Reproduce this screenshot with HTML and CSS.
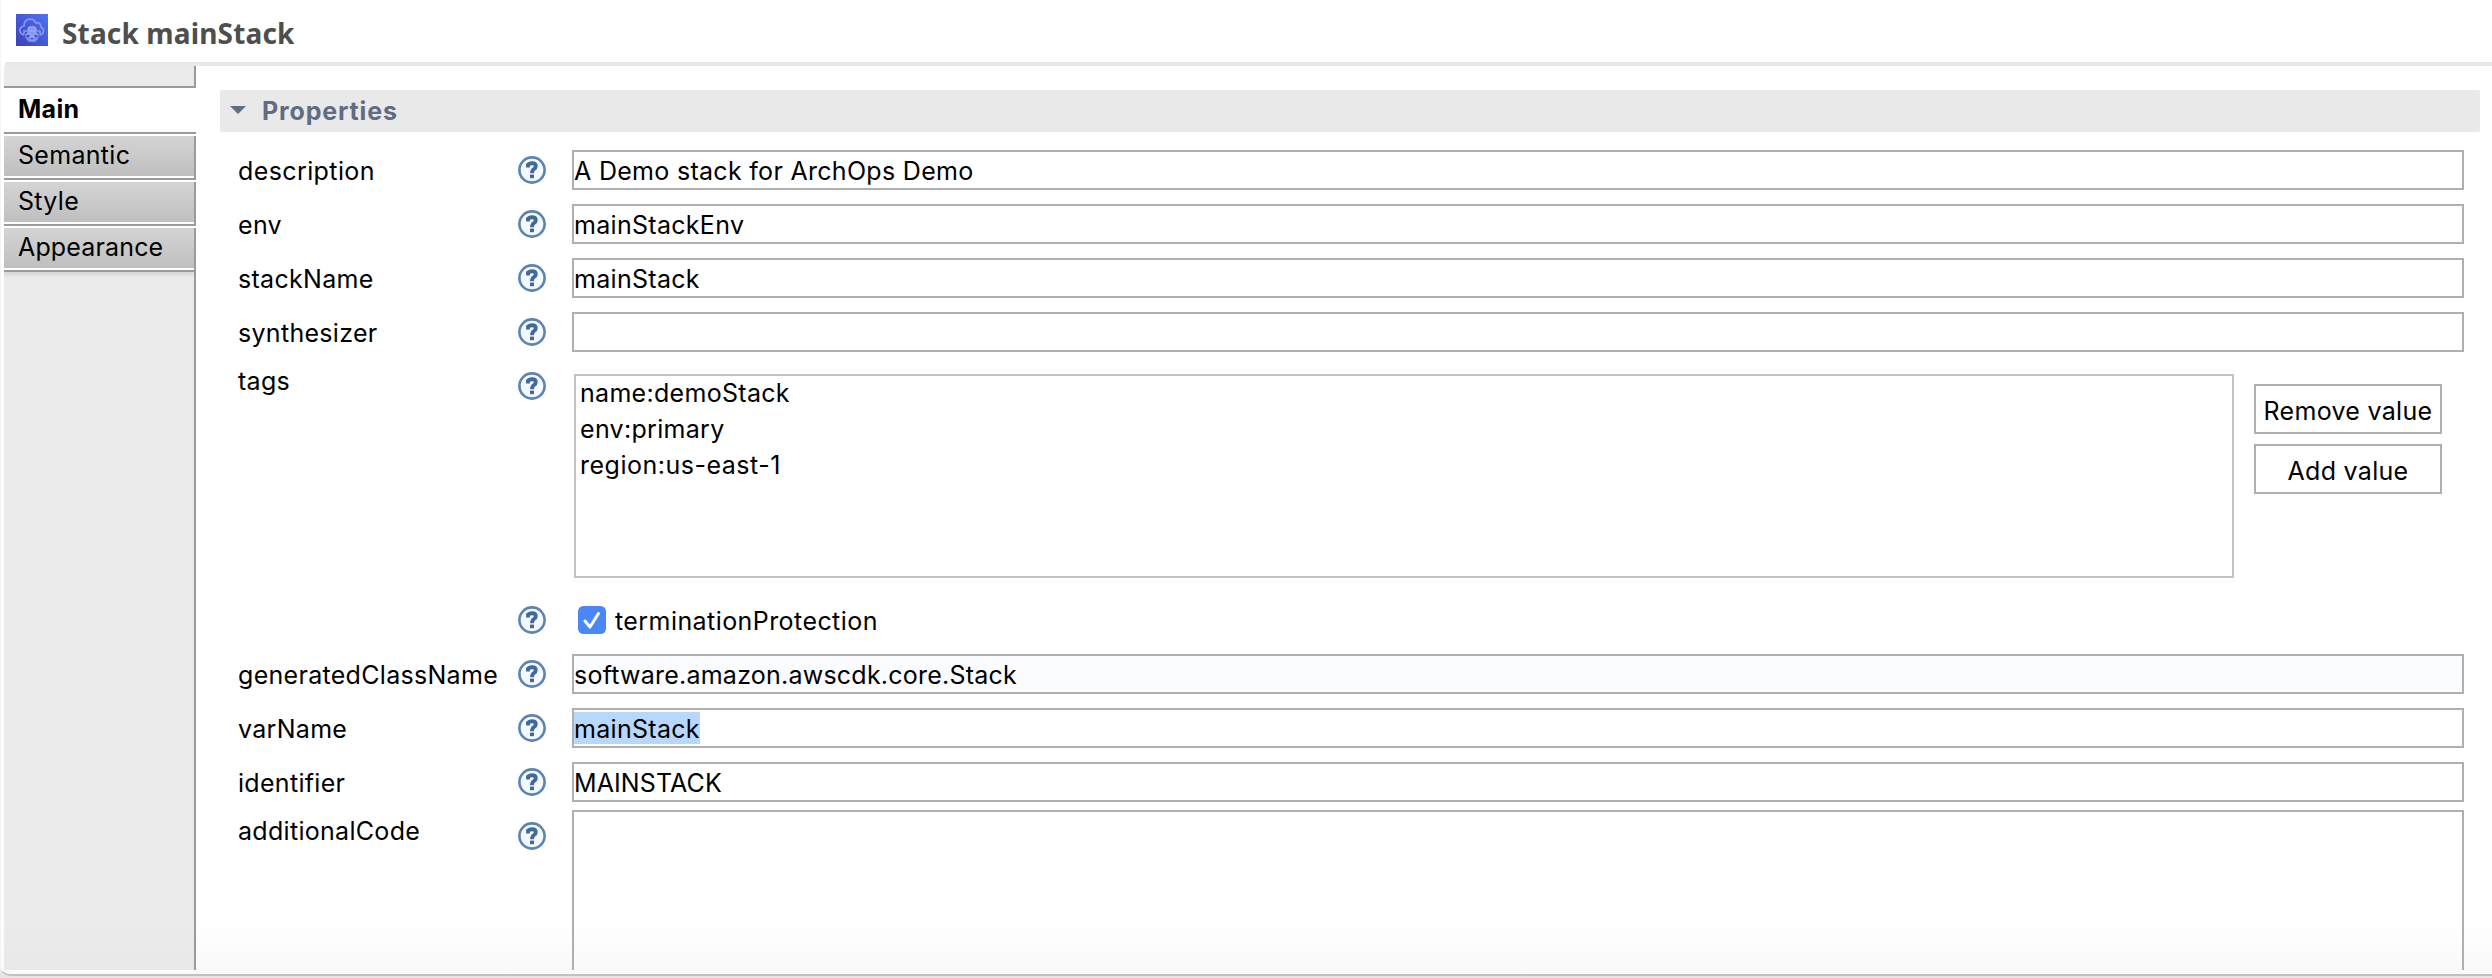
FILE: index.html
```
<!DOCTYPE html>
<html lang="en">
<head>
<meta charset="utf-8">
<title>Stack mainStack</title>
<link rel="stylesheet" href="styles.css">
</head>
<body>
<svg class="defs" width="0" height="0" aria-hidden="true">
  <symbol id="help" viewBox="0 0 28 28">
    <circle cx="14" cy="14" r="12.600" fill="#f3f9ff" stroke="#5b84b3" stroke-width="2.600"/>
    <path d="M10 11.500V8.600Q11.600 7.200 14 7.200Q17.800 7.200 17.800 10Q17.800 11.800 16 13Q14 14.300 14 17.200" fill="none" stroke="#42699c" stroke-width="3.900"/>
    <path d="M12 18.600h4v3.600h-4z" fill="#42699c"/>
  </symbol>
</svg>
<div class="panel">
  <header class="title">
    <svg class="logo" width="32" height="32" viewBox="0 0 32 32">
      <defs><linearGradient id="lg" x1="0" y1="1" x2="1" y2="0"><stop offset="0" stop-color="#3a40c0"/><stop offset="1" stop-color="#4f74ee"/></linearGradient></defs>
      <rect width="32" height="32" fill="url(#lg)"/>
      <g fill="none" stroke="#8797ee" stroke-width="1.700">
        <path d="M8 21C2 19 3 13 8 12C8 4 17 3 20 9C23 8 25 10 25 13C29 15 28 20 24 21"/>
        <path d="M12 17C11 11 21 11 20 17M8 20V17H24V20M9 22L12 19L16 22L20 19L23 22M10 23L13 27H19L22 23M13 24L16 21L19 24L16 27Z"/>
      </g>
      <path d="M12 13h8v7h-8zM14 21h4v3h-4z" fill="#a3b1f3" opacity=".7"/>
    </svg>
    <h1>Stack mainStack</h1>
  </header>
  <div class="body">
    <nav class="tabs">
      <div class="cap"></div>
      <div class="tab active">Main</div>
      <div class="tab">Semantic</div>
      <div class="tab">Style</div>
      <div class="tab appearance">Appearance</div>
      <div class="rest"></div>
    </nav>
    <main class="content">
      <div class="section">
        <svg width="16" height="8" viewBox="0 0 16 8"><path d="M0 0H16L8 8Z" fill="#5f6c82"/></svg>
        <h2>Properties</h2>
      </div>
      <div class="form">
        <div class="row"><label class="desc">description</label><svg class="help"><use href="#help"/></svg><div class="field">A Demo stack for ArchOps Demo</div></div>
        <div class="row"><label>env</label><svg class="help"><use href="#help"/></svg><div class="field">mainStackEnv</div></div>
        <div class="row"><label>stackName</label><svg class="help"><use href="#help"/></svg><div class="field">mainStack</div></div>
        <div class="row"><label>synthesizer</label><svg class="help"><use href="#help"/></svg><div class="field"></div></div>
        <div class="row tags">
          <label>tags</label><svg class="help"><use href="#help"/></svg>
          <div class="multi">
            <div class="list"><div>name:demoStack</div><div>env:primary</div><div class="region">region:us-east-1</div></div>
            <div class="buttons"><div class="button">Remove value</div><div class="button">Add value</div></div>
          </div>
        </div>
        <div class="row"><label></label><svg class="help"><use href="#help"/></svg>
          <div class="check">
            <svg width="28" height="28" viewBox="0 0 28 28"><rect width="28" height="28" rx="5.500" fill="#4a88f7"/><path d="M7 15L12 21L20.500 7.500" fill="none" stroke="#fff" stroke-width="3" stroke-linecap="round" stroke-linejoin="round"/></svg>
            <span>terminationProtection</span>
          </div>
        </div>
        <div class="row"><label>generatedClassName</label><svg class="help"><use href="#help"/></svg><div class="field readonly">software.amazon.awscdk.core.Stack</div></div>
        <div class="row"><label>varName</label><svg class="help"><use href="#help"/></svg><div class="field"><span class="selected">mainStack</span></div></div>
        <div class="row"><label>identifier</label><svg class="help"><use href="#help"/></svg><div class="field upper">MAINSTACK</div></div>
        <div class="row code"><label>additionalCode</label><svg class="help"><use href="#help"/></svg><div class="area"></div></div>
      </div>
    </main>
  </div>
</div>
</body>
</html>
```
FILE: styles.css
```
* { box-sizing: border-box; }
body {
  margin: 0;
  height: 978px;
  overflow: hidden;
  background: #e6e6e6;
  color: #000;
  font: 25px/40px Inter, sans-serif;
  letter-spacing: 0.3px;
  white-space: nowrap;
}
.defs { position: absolute; }
.panel {
  height: 976px;
  border-bottom: 2px solid #c1c1bd;
  border-left: 1px solid #f4f4f4;
  border-bottom-left-radius: 10px;
  background: linear-gradient(#fff 0, #fff 920px, #f9f9f9 974px);
}
.title {
  display: flex;
  height: 66px;
  margin-left: 4px;
  padding: 14px 0 0 11px;
  border-bottom: 4px solid #e9e9e9;
}
.logo { flex: none; }
h1 {
  margin: 0 0 0 14px;
  font: bold 28px/38px "Noto Sans", sans-serif;
  letter-spacing: 0.15px;
  color: #4e4e4e;
}
.body { display: flex; height: 904px; }
.tabs {
  display: flex;
  flex-direction: column;
  width: 192px;
  margin-left: 3px;
}
.cap {
  height: 20px;
  background: #ebebeb;
  border-right: 2px solid #9b9b9b;
}
.tab {
  height: 46px;
  padding: 0 0 0 14px;
  border-top: 2px solid #fff;
  border-bottom: 2px solid #9b9b9b;
  background: linear-gradient(#d4d4d4, #bfbfbf 40px, #fff 40px);
  box-shadow: inset -2px 0 #9b9b9b;
  line-height: 39px;
}
.tab.active {
  height: 48px;
  border-top: 2px solid #9b9b9b;
  background: #fff;
  box-shadow: none;
  font-weight: bold;
  line-height: 42px;
}
.appearance { letter-spacing: 0.15px; }
.rest {
  flex: 1;
  background: linear-gradient(#d8d8d8, #e3e3e3 4px, #ebebeb 5px, #ebebeb 650px, #e8e8e8);
  border-right: 2px solid #9b9b9b;
}
.content { flex: 1; padding: 24px 12px 0 24px; }
.section {
  display: flex;
  align-items: center;
  height: 42px;
  padding-left: 10px;
  border-radius: 2px;
  background: #e9e9e9;
}
.section svg { margin-bottom: 2px; }
h2 {
  margin: 0 0 0 16px;
  font: bold 25px/42px Inter, sans-serif;
  letter-spacing: 0.86px;
  color: #5f6c82;
}
.form { padding: 18px 16px 0 18px; }
.row {
  display: grid;
  grid-template-columns: 280px 54px 1fr;
  height: 40px;
  margin-bottom: 14px;
}
label { line-height: 42px; }
.desc { letter-spacing: 0.4px; }
.help { width: 28px; height: 28px; margin-top: 6px; }
.field {
  height: 40px;
  border: 2px solid #afafaf;
  background: #fff;
  line-height: 38px;
}
.readonly { background: #fbfcff; letter-spacing: 0.23px; }
.upper { letter-spacing: 0.1px; }
.selected {
  display: block;
  width: 126px;
  height: 32px;
  margin-top: 2px;
  background: #b8d7fc;
  line-height: 34px;
}
.tags { height: 220px; }
.tags label { line-height: 31px; }
.multi { display: flex; padding: 8px 0 0 2px; }
.list {
  width: 1660px;
  height: 204px;
  padding-left: 4px;
  border: 2px solid #c3c3c3;
  background: #fff;
  line-height: 36px;
}
.list div:first-child { margin-top: -1px; }
.region { letter-spacing: 0.5px; }
.buttons { display: grid; gap: 10px; align-content: start; margin: 10px 0 0 20px; }
.button {
  width: 188px;
  height: 50px;
  border: 2px solid #afafaf;
  background: #fff;
  line-height: 50px;
  text-align: center;
}
.check { display: flex; padding: 6px 0 0 6px; letter-spacing: 0.43px; line-height: 31px; }
.check span { margin-left: 9px; }
.code { height: 160px; margin: 0; }
.code label { line-height: 30px; }
.area {
  height: 160px;
  margin-top: -6px;
  border: 2px solid #afafaf;
  border-bottom: 0;
}
```
